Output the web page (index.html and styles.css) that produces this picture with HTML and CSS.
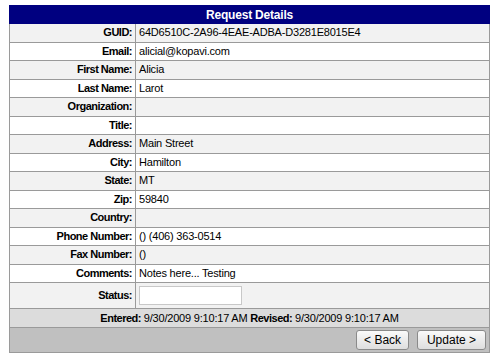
FILE: index.html
```html
<!DOCTYPE html>
<html lang="en">
<head>
  <meta charset="UTF-8">
  <title>Request Details</title>
  <link rel="stylesheet" href="styles.css">
</head>
<body>

  <table class="details">
    <tr class="title-row">
      <th colspan="2">Request Details</th>
    </tr>
    <tr class="alt"><td class="label">GUID:</td><td class="value">64D6510C-2A96-4EAE-ADBA-D3281E8015E4</td></tr>
    <tr><td class="label">Email:</td><td class="value">alicial@kopavi.com</td></tr>
    <tr class="alt"><td class="label">First Name:</td><td class="value">Alicia</td></tr>
    <tr><td class="label">Last Name:</td><td class="value">Larot</td></tr>
    <tr class="alt"><td class="label">Organization:</td><td class="value"></td></tr>
    <tr><td class="label">Title:</td><td class="value"></td></tr>
    <tr class="alt"><td class="label">Address:</td><td class="value">Main Street</td></tr>
    <tr><td class="label">City:</td><td class="value">Hamilton</td></tr>
    <tr class="alt"><td class="label">State:</td><td class="value">MT</td></tr>
    <tr><td class="label">Zip:</td><td class="value">59840</td></tr>
    <tr class="alt"><td class="label">Country:</td><td class="value"></td></tr>
    <tr><td class="label">Phone Number:</td><td class="value">() (406) 363-0514</td></tr>
    <tr class="alt"><td class="label">Fax Number:</td><td class="value">()</td></tr>
    <tr><td class="label">Comments:</td><td class="value">Notes here... Testing</td></tr>
    <tr class="alt status-row">
      <td class="label">Status:</td>
      <td class="value"><input type="text" class="status-input"></td>
    </tr>
    <tr class="stamp-row">
      <td colspan="2"><b>Entered:</b> 9/30/2009 9:10:17 AM <b>Revised:</b> 9/30/2009 9:10:17 AM</td>
    </tr>
    <tr class="button-row">
      <td colspan="2">
        <button class="btn btn-back">&lt; Back</button>
        <button class="btn btn-next">Update &gt;</button>
      </td>
    </tr>
  </table>

</body>
</html>
```

FILE: styles.css
```css
body {
  margin: 0;
  padding: 5px 0 0 9px;
  background: #fff;
  font-family: "Liberation Sans", Arial, sans-serif;
  font-size: 11px;
  color: #000;
}

.details {
  width: 481px;
  border-collapse: collapse;
  border: 1px solid #999;
}

.details td {
  border: 1px solid #9a9a9a;
  height: 17.5px;
  padding: 0 3px;
  line-height: 13px;
  background: #fff;
  letter-spacing: -0.2px;
}

.details tr.alt td {
  background: #f2f2f2;
}

.title-row th {
  background: #000080;
  color: #fff;
  font-weight: bold;
  font-size: 12px;
  height: 17px;
  padding: 0;
  border: 1px solid #000080;
  letter-spacing: -0.2px;
}

.details td.label {
  width: 119px;
  text-align: right;
  font-weight: bold;
  white-space: nowrap;
  letter-spacing: -0.5px;
}

.value {
  text-align: left;
}

.status-row td {
  height: 25px;
}

.status-input {
  display: block;
  width: 97px;
  height: 15px;
  margin: 0;
  padding: 1px 2px;
  border: 1px solid #c8c8c8;
  font: inherit;
}

.stamp-row td {
  background: #dcdcdc;
  text-align: center;
  height: 18px;
}

.stamp-row b {
  letter-spacing: -0.5px;
}

.button-row td {
  background: #c0c0c0;
  text-align: right;
  height: 24px;
  padding: 0 3px 0 0;
}

.btn {
  font-family: "Liberation Sans", Arial, sans-serif;
  font-size: 12px;
  height: 20px;
  padding: 0 7px;
  margin-left: 5px;
  color: #000;
  background: linear-gradient(#fafafa, #dedede);
  border: 1px solid #8a8a8a;
  border-radius: 3px;
  cursor: pointer;
}

.btn-next {
  padding: 0 9px;
}
```
